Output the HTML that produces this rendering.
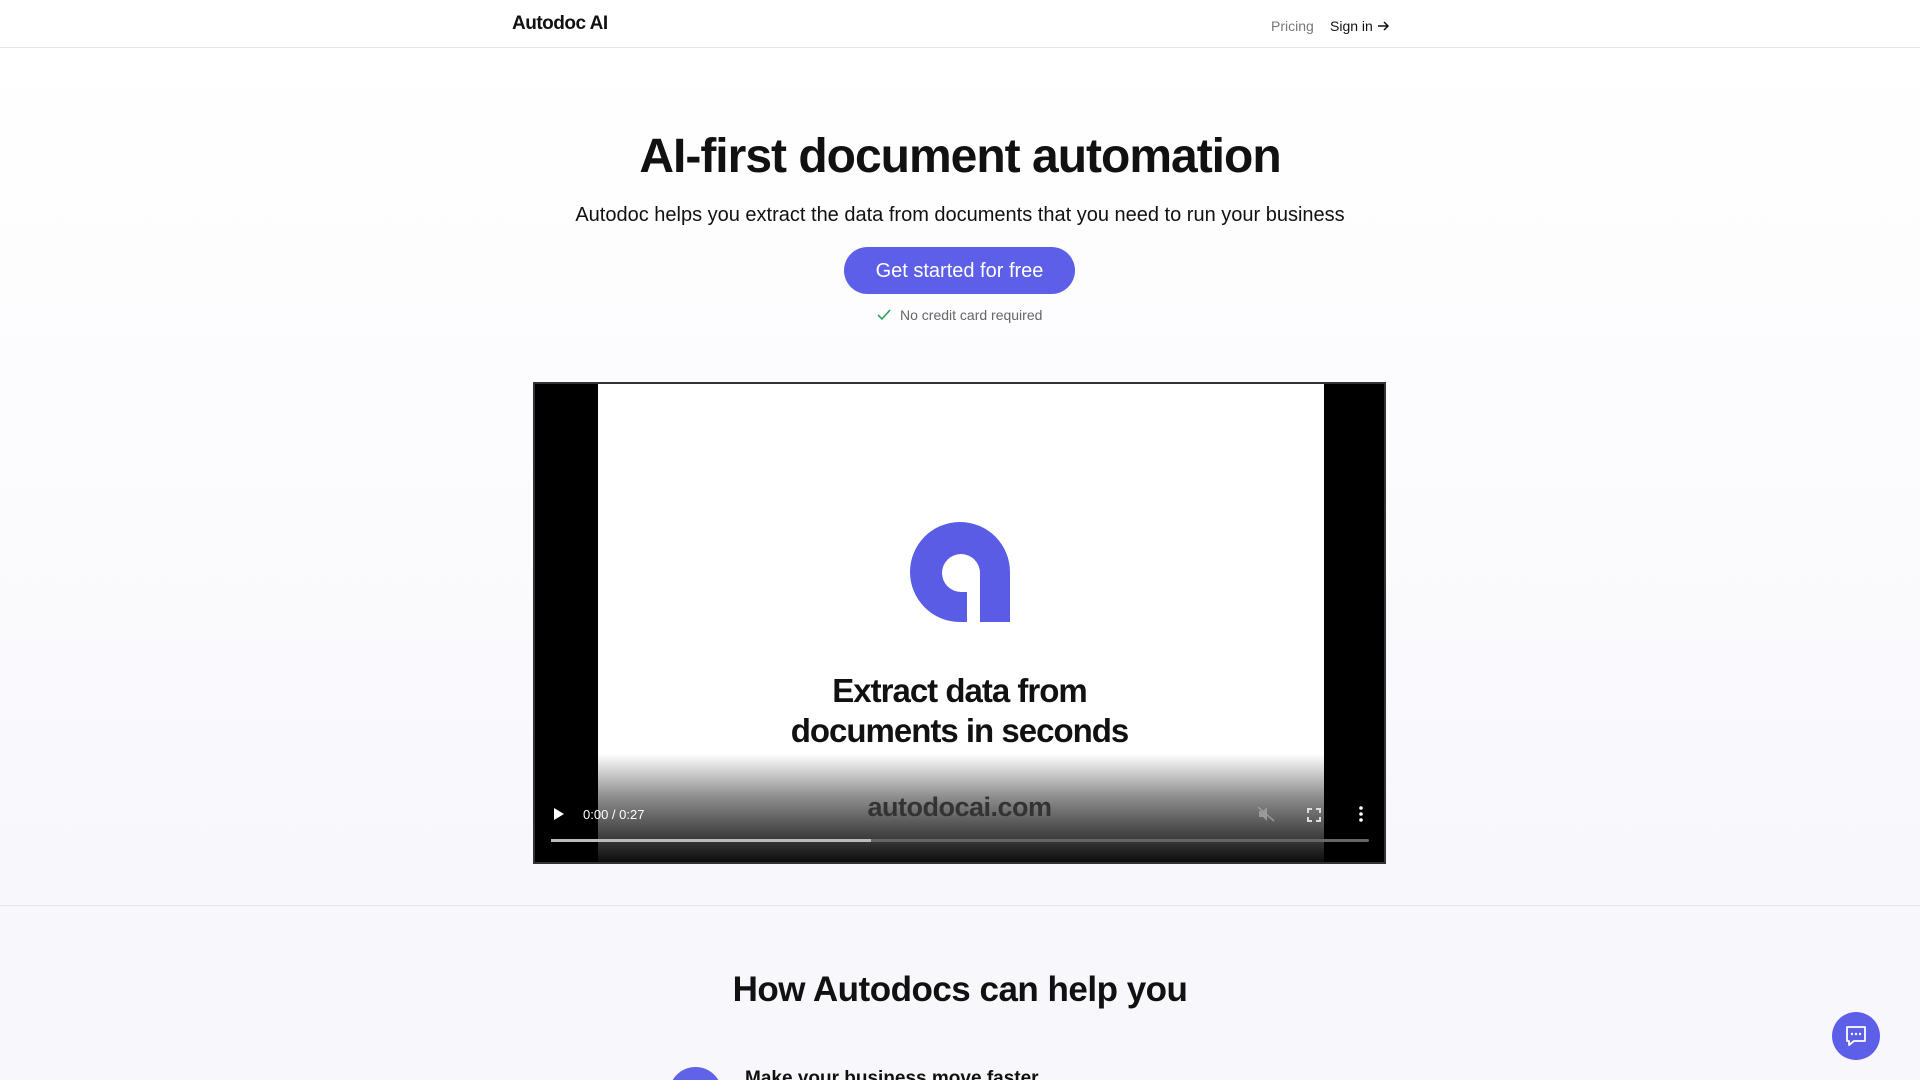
<!DOCTYPE html>
<html style="width:1920px;height:1080px;overflow:hidden"><head><meta charset="utf-8"><style>
*{margin:0;padding:0;box-sizing:border-box}
body{width:1920px;height:1080px;overflow:hidden;font-family:"Liberation Sans",sans-serif;background:linear-gradient(#fff 48px,#f8f7fc 900px);position:relative;color:#111}
.nav{position:absolute;top:0;left:0;width:1920px;height:48px;border-bottom:1px solid #e6e6e9;background:#fff}
.logo{position:absolute;left:512px;top:13px;font-size:19px;font-weight:bold;letter-spacing:-0.5px}
.pr{position:absolute;left:1271px;top:18px;font-size:14px;color:#777}
.si{position:absolute;left:1330px;top:18px;font-size:14px;color:#111}
h1{position:absolute;top:129px;width:1920px;text-align:center;font-size:48px;font-weight:bold;letter-spacing:-1px}
.sub{position:absolute;top:204px;width:1920px;text-align:center;font-size:20px;color:#111}
.btn{position:absolute;left:844px;top:247px;width:231px;height:47px;border-radius:24px;background:#5d5fe8;color:#fff;font-size:20px;text-align:center;line-height:48px}
.nc{position:absolute;top:307px;left:876px;font-size:14px;color:#666}
.vid{position:absolute;left:533px;top:382px;width:853px;height:482px;background:#000;border:2px solid #333}
.inner{position:absolute;left:63px;top:0;width:726px;height:478px;background:#fff}
.grad{position:absolute;left:0;top:370px;width:849px;height:108px;background:linear-gradient(rgba(0,0,0,0),rgba(0,0,0,.45) 40%,rgba(0,0,0,.95))}
.t1{position:absolute;left:0;top:287px;width:849px;text-align:center;font-size:33px;font-weight:bold;line-height:40px;letter-spacing:-1px;color:#111}
.url{position:absolute;left:0;top:408px;width:849px;text-align:center;font-size:27px;font-weight:bold;color:#333;letter-spacing:-0.5px}
.time{position:absolute;left:48px;top:423px;color:#fff;font-size:13px}
.bar{position:absolute;left:16px;top:455px;width:818px;height:3px;background:#666;border-radius:2px}
.bar i{display:block;width:320px;height:3px;background:#bbb}
.line{position:absolute;top:905px;left:0;width:1920px;height:1px;background:#e6e6ea}
h2{position:absolute;top:970px;width:1920px;text-align:center;font-size:35px;font-weight:bold;letter-spacing:-0.5px}
.circ{position:absolute;left:669px;top:1067px;width:53px;height:53px;border-radius:50%;background:#6062e8}
.mk{position:absolute;left:745px;top:1068px;font-size:19px;font-weight:bold}
.chat{position:absolute;left:1832px;top:1012px;width:48px;height:48px;border-radius:50%;background:#5d5fe8}
</style></head><body>
<div class="nav"><div class="logo">Autodoc AI</div><div class="pr">Pricing</div><div class="si">Sign in <svg width="13" height="12" viewBox="0 0 13 12" style="vertical-align:-1px"><path d="M1 6H11M7 2L11 6L7 10" stroke="#111" stroke-width="1.5" fill="none"/></svg></div></div>
<h1>AI-first document automation</h1>
<div class="sub">Autodoc helps you extract the data from documents that you need to run your business</div>
<div class="btn">Get started for free</div>
<div class="nc"><svg width="16" height="14" viewBox="0 0 16 14" style="vertical-align:-2px;margin-right:8px"><path d="M2 7L6 11L14 2" stroke="#2ca55a" stroke-width="1.6" fill="none"/></svg>No credit card required</div>
<div class="vid">
<div class="inner"></div>
<svg style="position:absolute;left:0;top:0" width="849" height="478"><path fill-rule="evenodd" fill="#5a5ce6" transform="translate(-535,-384)" d="M1010 622H960A50 50 0 1 1 1010 572Z M980 622V573A19 19 0 1 0 961 592H967V622Z"/></svg>
<div class="t1">Extract data from<br>documents in seconds</div>
<div class="grad"></div>
<div class="url">autodocai.com</div>
<svg style="position:absolute;left:18px;top:423px" width="12" height="14"><path d="M1 1L11 7L1 13Z" fill="#fff"/></svg>
<div class="time">0:00 / 0:27</div>
<svg style="position:absolute;left:722px;top:422px" width="18" height="16"><path d="M2 5H6L10 1V15L6 11H2Z" fill="#999"/><path d="M1 1L17 15" stroke="#999" stroke-width="1.5"/></svg>
<svg style="position:absolute;left:772px;top:424px" width="14" height="14" fill="none" stroke="#ddd" stroke-width="2"><path d="M1 5V1H5M9 1H13V5M13 9V13H9M5 13H1V9"/></svg>
<svg style="position:absolute;left:824px;top:422px" width="4" height="16" fill="#fff"><circle cx="2" cy="2" r="1.8"/><circle cx="2" cy="8" r="1.8"/><circle cx="2" cy="14" r="1.8"/></svg>
<div class="bar"><i></i></div>
</div>
<div class="line"></div>
<h2>How Autodocs can help you</h2>
<div class="circ"></div>
<div class="mk">Make your business move faster</div>
<div class="chat"><svg width="48" height="48" viewBox="0 0 48 48"><path d="M15 15H33V29H22L17 33V29H15Z" fill="none" stroke="#fff" stroke-width="1.8" stroke-linejoin="round"/><circle cx="20" cy="22" r="1.2" fill="#fff"/><circle cx="24" cy="22" r="1.2" fill="#fff"/><circle cx="28" cy="22" r="1.2" fill="#fff"/></svg></div>
</body></html>
